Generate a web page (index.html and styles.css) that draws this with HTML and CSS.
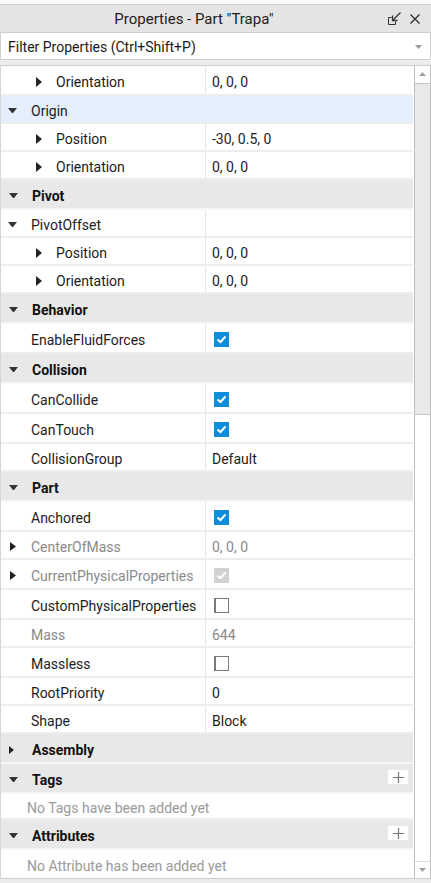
FILE: index.html
```html
<!DOCTYPE html>
<html>
<head>
<meta charset="utf-8">
<link rel="stylesheet" href="styles.css">
</head>
<body>
<div class="panel">
  <div class="titlebar">
    <div class="title">Properties - Part "Trapa"</div>
    <div class="tbtns">
      <svg class="dock" width="13" height="13" viewBox="0 0 13 13"><path d="M3.5 5.5H0.5V12.5H7.5V9.5" fill="none" stroke="#333" stroke-width="1"/><path d="M12.5 0.5L5 8" stroke="#333" stroke-width="1.3" fill="none"/><path d="M4.5 3.5V8.5H9.5" fill="none" stroke="#333" stroke-width="1.3"/></svg>
      <svg class="close" width="10" height="10" viewBox="0 0 10 10"><path d="M0.5 0.5L9.5 9.5M9.5 0.5L0.5 9.5" stroke="#333" stroke-width="1.4"/></svg>
    </div>
  </div>
  <div class="filter">
    <span class="ftext">Filter Properties (Ctrl+Shift+P)</span>
    <svg class="fdrop" width="7" height="4" viewBox="0 0 7 4"><polygon points="0,0 7,0 3.5,4" fill="#9a9a9a"/></svg>
  </div>
  <div class="listwrap">
    <div class="list">
      <div class="row first"><div class="name t2"><span class="tri"><svg width="6" height="10" viewBox="0 0 6 10"><polygon points="0,0 6,5 0,10" fill="#222"/></svg></span>Orientation</div><div class="value">0, 0, 0</div></div>
      <div class="row sel"><div class="name t1"><span class="tri"><svg width="9" height="5" viewBox="0 0 9 5"><polygon points="0,0 9,0 5,5 4,5" fill="#333"/></svg></span>Origin</div><div class="value"></div></div>
      <div class="row"><div class="name t2"><span class="tri"><svg width="6" height="10" viewBox="0 0 6 10"><polygon points="0,0 6,5 0,10" fill="#222"/></svg></span>Position</div><div class="value">-30, 0.5, 0</div></div>
      <div class="row"><div class="name t2"><span class="tri"><svg width="6" height="10" viewBox="0 0 6 10"><polygon points="0,0 6,5 0,10" fill="#222"/></svg></span>Orientation</div><div class="value">0, 0, 0</div></div>

      <div class="hdr"><span class="tri"><svg width="9" height="5" viewBox="0 0 9 5"><polygon points="0,0 9,0 5,5 4,5" fill="#333"/></svg></span>Pivot</div>
      <div class="row"><div class="name t1"><span class="tri"><svg width="9" height="5" viewBox="0 0 9 5"><polygon points="0,0 9,0 5,5 4,5" fill="#333"/></svg></span>PivotOffset</div><div class="value"></div></div>
      <div class="row"><div class="name t2"><span class="tri"><svg width="6" height="10" viewBox="0 0 6 10"><polygon points="0,0 6,5 0,10" fill="#222"/></svg></span>Position</div><div class="value">0, 0, 0</div></div>
      <div class="row"><div class="name t2"><span class="tri"><svg width="6" height="10" viewBox="0 0 6 10"><polygon points="0,0 6,5 0,10" fill="#222"/></svg></span>Orientation</div><div class="value">0, 0, 0</div></div>

      <div class="hdr"><span class="tri"><svg width="9" height="5" viewBox="0 0 9 5"><polygon points="0,0 9,0 5,5 4,5" fill="#333"/></svg></span>Behavior</div>
      <div class="row tall"><div class="name">EnableFluidForces</div><div class="value"><span class="cb on"><svg width="15" height="15" viewBox="0 0 15 15"><path d="M3.5 7.5L6.5 10L11.5 4.5" fill="none" stroke="#fff" stroke-width="2"/></svg></span></div></div>

      <div class="hdr"><span class="tri"><svg width="9" height="5" viewBox="0 0 9 5"><polygon points="0,0 9,0 5,5 4,5" fill="#333"/></svg></span>Collision</div>
      <div class="row tall"><div class="name">CanCollide</div><div class="value"><span class="cb on"><svg width="15" height="15" viewBox="0 0 15 15"><path d="M3.5 7.5L6.5 10L11.5 4.5" fill="none" stroke="#fff" stroke-width="2"/></svg></span></div></div>
      <div class="row tall"><div class="name">CanTouch</div><div class="value"><span class="cb on"><svg width="15" height="15" viewBox="0 0 15 15"><path d="M3.5 7.5L6.5 10L11.5 4.5" fill="none" stroke="#fff" stroke-width="2"/></svg></span></div></div>
      <div class="row"><div class="name">CollisionGroup</div><div class="value">Default</div></div>

      <div class="hdr"><span class="tri"><svg width="9" height="5" viewBox="0 0 9 5"><polygon points="0,0 9,0 5,5 4,5" fill="#333"/></svg></span>Part</div>
      <div class="row tall"><div class="name">Anchored</div><div class="value"><span class="cb on"><svg width="15" height="15" viewBox="0 0 15 15"><path d="M3.5 7.5L6.5 10L11.5 4.5" fill="none" stroke="#fff" stroke-width="2"/></svg></span></div></div>
      <div class="row"><div class="name t0 dis"><span class="tri"><svg width="6" height="9" viewBox="0 0 6 9"><polygon points="0,0 6,4.5 0,9" fill="#222"/></svg></span>CenterOfMass</div><div class="value dis">0, 0, 0</div></div>
      <div class="row tall"><div class="name t0 dis"><span class="tri"><svg width="6" height="9" viewBox="0 0 6 9"><polygon points="0,0 6,4.5 0,9" fill="#222"/></svg></span>CurrentPhysicalProperties</div><div class="value"><span class="cb ro"><svg width="15" height="15" viewBox="0 0 15 15"><path d="M3.5 7.5L6.5 10L11.5 4.5" fill="none" stroke="#fff" stroke-width="2"/></svg></span></div></div>
      <div class="row tall"><div class="name">CustomPhysicalProperties</div><div class="value"><span class="cb off"></span></div></div>
      <div class="row"><div class="name dis">Mass</div><div class="value dis">644</div></div>
      <div class="row tall"><div class="name">Massless</div><div class="value"><span class="cb off"></span></div></div>
      <div class="row"><div class="name">RootPriority</div><div class="value">0</div></div>
      <div class="row"><div class="name">Shape</div><div class="value">Block</div></div>

      <div class="hdr"><span class="tri"><svg width="5" height="8" viewBox="0 0 5 8"><polygon points="0,0 5,4 0,8" fill="#222"/></svg></span>Assembly</div>
      <div class="hdr"><span class="tri"><svg width="9" height="5" viewBox="0 0 9 5"><polygon points="0,0 9,0 5,5 4,5" fill="#333"/></svg></span>Tags<span class="plus"><svg width="11" height="11" viewBox="0 0 11 11"><path d="M5.5 0V11M0 5.5H11" stroke="#777" stroke-width="1.2"/></svg></span></div>
      <div class="empty">No Tags have been added yet</div>
      <div class="hdr"><span class="tri"><svg width="9" height="5" viewBox="0 0 9 5"><polygon points="0,0 9,0 5,5 4,5" fill="#333"/></svg></span>Attributes<span class="plus"><svg width="11" height="11" viewBox="0 0 11 11"><path d="M5.5 0V11M0 5.5H11" stroke="#777" stroke-width="1.2"/></svg></span></div>
      <div class="empty last">No Attribute has been added yet</div>
    </div>
    <div class="scrollbar">
      <div class="sbtn up"><svg width="7" height="4" viewBox="0 0 7 4"><polygon points="0,4 7,4 3.5,0" fill="#a0a0a0"/></svg></div>
      <div class="thumb"></div>
      <div class="track"></div>
      <div class="sbtn down"><svg width="7" height="4" viewBox="0 0 7 4"><polygon points="0,0 7,0 3.5,4" fill="#a0a0a0"/></svg></div>
    </div>
  </div>
</div>
</body>
</html>
```
FILE: styles.css
```css
* { box-sizing: border-box; }
html, body { margin: 0; padding: 0; }
body {
  width: 431px;
  height: 883px;
  background: #ececec;
  font-family: Roboto, "Liberation Sans", sans-serif;
  font-size: 14px;
  color: #1c1c1c;
  overflow: hidden;
}
.panel {
  display: flex;
  flex-direction: column;
  height: 883px;
}
.titlebar {
  height: 32px;
  border-top: 4px solid #fafafa;
  background: #e4e4e4;
  box-shadow: inset 0 1px 0 #d2d2d2;
  display: flex;
  align-items: center;
  padding-top: 2px;
}
.title {
  flex: 1;
  text-align: center;
  font-size: 15px;
  color: #222;
  padding-left: 2px;
}
.tbtns {
  width: 45px;
  display: flex;
  align-items: center;
  gap: 9px;
  padding-left: 2px;
}
.dock { margin-top: -1px; }
.filter {
  height: 28px;
  background: #fff;
  border: 1px solid #cfcfcf;
  display: flex;
  align-items: center;
  padding-left: 7px;
  padding-right: 8px;
  padding-top: 1px;
}
.ftext { flex: 1; color: #1a1a1a; }
.fdrop { margin-top: 1px; }
.listwrap {
  margin-top: 5px;
  border-top: 1px solid #cdcdcd;
  border-bottom: 1px solid #cdcdcd;
  border-left: 1px solid #d6d6d6;
  display: flex;
  background: #fff;
}
.list {
  flex: 1;
  display: flex;
  flex-direction: column;
  padding-right: 1px;
}
.row {
  height: 28px;
  display: flex;
  border-bottom: 2px solid #ededed;
  background: #fff;
}
.row.first { height: 30px; }
.row.tall { height: 30px; }
.row.sel { background: #e4eefc; }
.row.sel .name { border-right-color: transparent; }
.name {
  width: 205px;
  display: flex;
  align-items: center;
  padding-left: 30px;
  padding-top: 3px;
  border-right: 1px solid #e6e6e6;
  white-space: nowrap;
}
.name.t1 { padding-left: 7px; }
.name.t1 .tri { width: 23px; }
.name.t2 { padding-left: 35px; }
.name.t2 .tri { width: 20px; }
.name.t0 { padding-left: 9px; }
.name.t0 .tri { width: 21px; }
.tri { display: flex; align-items: center; }
.dis { color: #8a8a8a; }
.value {
  flex: 1;
  display: flex;
  align-items: center;
  padding-left: 6px;
  padding-top: 3px;
}
.cb {
  width: 15px;
  height: 15px;
  margin-left: 2px;
  display: block;
}
.cb svg { display: block; }
.cb.on { background: #0f8ddb; }
.cb.ro { background: #d2d2d2; }
.cb.off {
  background: #fff;
  border: 1px solid #7a7a7a;
  border-left-width: 2px;
}
.hdr {
  height: 30px;
  display: flex;
  align-items: center;
  background: #e8e8e8;
  border-bottom: 2px solid #f6f6f6;
  padding-left: 8px;
  padding-top: 3px;
  font-weight: bold;
  color: #111;
}
.hdr .tri { width: 23px; }
.plus {
  margin-left: auto;
  margin-right: 5px;
  margin-top: -5px;
  width: 20px;
  height: 14px;
  background: #fff;
  display: flex;
  align-items: center;
  justify-content: center;
}
.empty {
  height: 26px;
  display: flex;
  align-items: center;
  padding-left: 26px;
  padding-top: 3px;
  color: #9a9a9a;
  background: #fff;
  border-bottom: 2px solid #ededed;
}
.empty.last { border-bottom: none; height: 28px; }
.scrollbar {
  width: 17px;
  border-left: 1px solid #c0c0c0;
  border-right: 1px solid #c0c0c0;
  display: flex;
  flex-direction: column;
  background: #fff;
}
.sbtn {
  height: 17px;
  display: flex;
  align-items: center;
  justify-content: center;
  background: #fff;
}
.sbtn.up { padding-bottom: 2px; }
.thumb {
  height: 332px;
  background: #e9e9e9;
  border-top: 1px solid #c4c4c4;
  border-bottom: 1px solid #c4c4c4;
}
.track { flex: 1; }
.sbtn.down { border-top: 1px solid #dcdcdc; }
```
